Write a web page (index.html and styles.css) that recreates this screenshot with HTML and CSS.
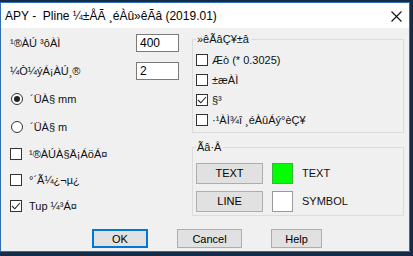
FILE: index.html
```
<!DOCTYPE html>
<html lang="ko">
<head>
    <meta charset="UTF-8">
    <title>APY - Pline</title>
    <link rel="stylesheet" href="styles.css">
</head>
<body>
    <div class="window">
        <div class="titlebar">
            <span class="title">APY -  Pline ¼±ÅÃ ¸éÀû»êÃâ (2019.01)</span>
            <span class="close">
                <svg width="11" height="11" viewBox="0 0 11 11"><path d="M0.5 0.5 L10.5 10.5 M10.5 0.5 L0.5 10.5" stroke="#111" stroke-width="1.1" fill="none"/></svg>
            </span>
        </div>
        <div class="client">
            <div class="columns">
                <div class="left">
                    <div class="row">
                        <span class="label">¹®ÀÚ ³ôÀÌ</span>
                        <input class="field" type="text" value="400">
                    </div>
                    <div class="row">
                        <span class="label">¼Ò¼ýÁ¡ÀÚ¸®</span>
                        <input class="field" type="text" value="2">
                    </div>
                    <div class="row">
                        <span class="radio on"></span>
                        <span class="opt">´ÜÀ§ mm</span>
                    </div>
                    <div class="row">
                        <span class="radio"></span>
                        <span class="opt">´ÜÀ§ m</span>
                    </div>
                    <div class="row compact">
                        <span class="check"></span>
                        <span class="opt">¹®ÀÚÀ§Ä¡ÁöÁ¤</span>
                    </div>
                    <div class="row compact">
                        <span class="check"></span>
                        <span class="opt">°´Ã¼¿¬µ¿</span>
                    </div>
                    <div class="row compact">
                        <span class="check on"><svg width="12" height="12" viewBox="0 0 12 12"><path d="M2 6 L4.8 8.8 L10 3" stroke="#222" stroke-width="1.1" fill="none"/></svg></span>
                        <span class="opt">Tup ¼³Á¤</span>
                    </div>
                </div>
                <div class="right">
                    <div class="group calc">
                        <span class="legend">»êÃâÇ¥±â</span>
                        <div class="grow">
                            <span class="check"></span>
                            <span class="gopt">Æò (* 0.3025)</span>
                        </div>
                        <div class="grow">
                            <span class="check"></span>
                            <span class="gopt">±æÀÌ</span>
                        </div>
                        <div class="grow">
                            <span class="check on"><svg width="12" height="12" viewBox="0 0 12 12"><path d="M2 6 L4.8 8.8 L10 3" stroke="#222" stroke-width="1.1" fill="none"/></svg></span>
                            <span class="gopt">§³</span>
                        </div>
                        <div class="grow">
                            <span class="check"></span>
                            <span class="gopt">·¹ÀÌ¾î ¸éÀûÁý°èÇ¥</span>
                        </div>
                    </div>
                    <div class="group output">
                        <span class="legend">Ãâ·Â</span>
                        <div class="orow">
                            <button class="btn layer">TEXT</button>
                            <span class="swatch green"></span>
                            <span class="olabel">TEXT</span>
                        </div>
                        <div class="orow second">
                            <button class="btn layer">LINE</button>
                            <span class="swatch white"></span>
                            <span class="olabel">SYMBOL</span>
                        </div>
                    </div>
                </div>
            </div>
            <div class="actions">
                <button class="btn ok">OK</button>
                <button class="btn cancel">Cancel</button>
                <button class="btn help">Help</button>
            </div>
        </div>
    </div>
</body>
</html>
```
FILE: styles.css
```
body {
    margin: 0;
    padding-top: 2px;
    width: 413px;
    height: 254px;
    background-color: #142c48;
    font-family: "Liberation Sans", Arial, sans-serif;
    font-size: 11px;
    color: #111;
    overflow: hidden;
}
.window {
    width: 410px;
    height: 250px;
    box-sizing: border-box;
    border: 1px solid #2f6fb2;
    background-color: #f0f0f0;
    display: flex;
    flex-direction: column;
}
.titlebar {
    height: 25px;
    background: #fff;
    display: flex;
    align-items: center;
    justify-content: space-between;
    padding: 0 7px 0 4px;
}
.title {
    font-size: 12px;
    white-space: pre;
    color: #000;
    padding-top: 1px;
}
.close {
    display: flex;
    padding-top: 1px;
}
.client {
    flex: 1;
    display: flex;
    flex-direction: column;
}
.columns {
    display: flex;
    gap: 13px;
    padding-left: 9px;
}
.left {
    width: 169px;
    padding-top: 1px;
}
.row {
    height: 28px;
    display: flex;
    align-items: center;
}
.row.compact {
    height: 26px;
}
.label {
    flex: 1;
}
.field {
    width: 43px;
    height: 18px;
    box-sizing: border-box;
    border: 1px solid #7a7a7a;
    padding: 0 0 0 3px;
    margin: 0;
    font-family: "Liberation Sans", Arial, sans-serif;
    font-size: 12px;
    color: #000;
    background: #fff;
    outline: none;
}
.radio {
    width: 12px;
    height: 12px;
    box-sizing: border-box;
    border: 1px solid #333;
    border-radius: 50%;
    background: #fff;
    margin-left: 1px;
    display: flex;
    align-items: center;
    justify-content: center;
}
.radio.on::after {
    content: "";
    width: 6px;
    height: 6px;
    border-radius: 50%;
    background: #222;
}
.check {
    width: 12px;
    height: 12px;
    box-sizing: border-box;
    border: 1px solid #333;
    background: #fff;
    display: flex;
    flex-shrink: 0;
}
.check svg {
    margin: -1px;
}
.opt {
    margin-left: 7px;
}
.right {
    width: 212px;
}
.group {
    position: relative;
    box-sizing: border-box;
    border: 1px solid #dcdcdc;
    padding-left: 3px;
}
.legend {
    position: absolute;
    top: -7px;
    left: 3px;
    padding: 0 2px 0 1px;
    line-height: 13px;
    background: #f0f0f0;
}
.calc {
    margin-top: 11px;
    height: 94px;
    padding-top: 10px;
}
.grow {
    height: 20px;
    display: flex;
    align-items: center;
}
.gopt {
    margin-left: 4px;
}
.output {
    margin-top: 14px;
    height: 69px;
    padding-top: 14px;
}
.orow {
    height: 22px;
    display: flex;
    align-items: center;
}
.orow.second {
    margin-top: 6px;
}
.btn {
    box-sizing: border-box;
    border: 1px solid #adadad;
    background: #e1e1e1;
    font-family: "Liberation Sans", Arial, sans-serif;
    font-size: 11px;
    color: #000;
    padding: 0;
    margin: 0;
}
.layer {
    width: 67px;
    height: 21px;
}
.swatch {
    width: 21px;
    height: 21px;
    box-sizing: border-box;
    margin-left: 9px;
}
.swatch.green {
    background: #00ff00;
    border: 1px solid #3ab53a;
}
.swatch.white {
    background: #fff;
    border: 1px solid #9a9a9a;
}
.olabel {
    margin-left: 9px;
}
.actions {
    display: flex;
    gap: 29px;
    padding-left: 91px;
    margin-top: 10px;
}
.actions .btn {
    height: 19px;
}
.ok {
    width: 56px;
    border: 2px solid #0078d7;
}
.cancel {
    width: 65px;
}
.help {
    width: 51px;
}
```
